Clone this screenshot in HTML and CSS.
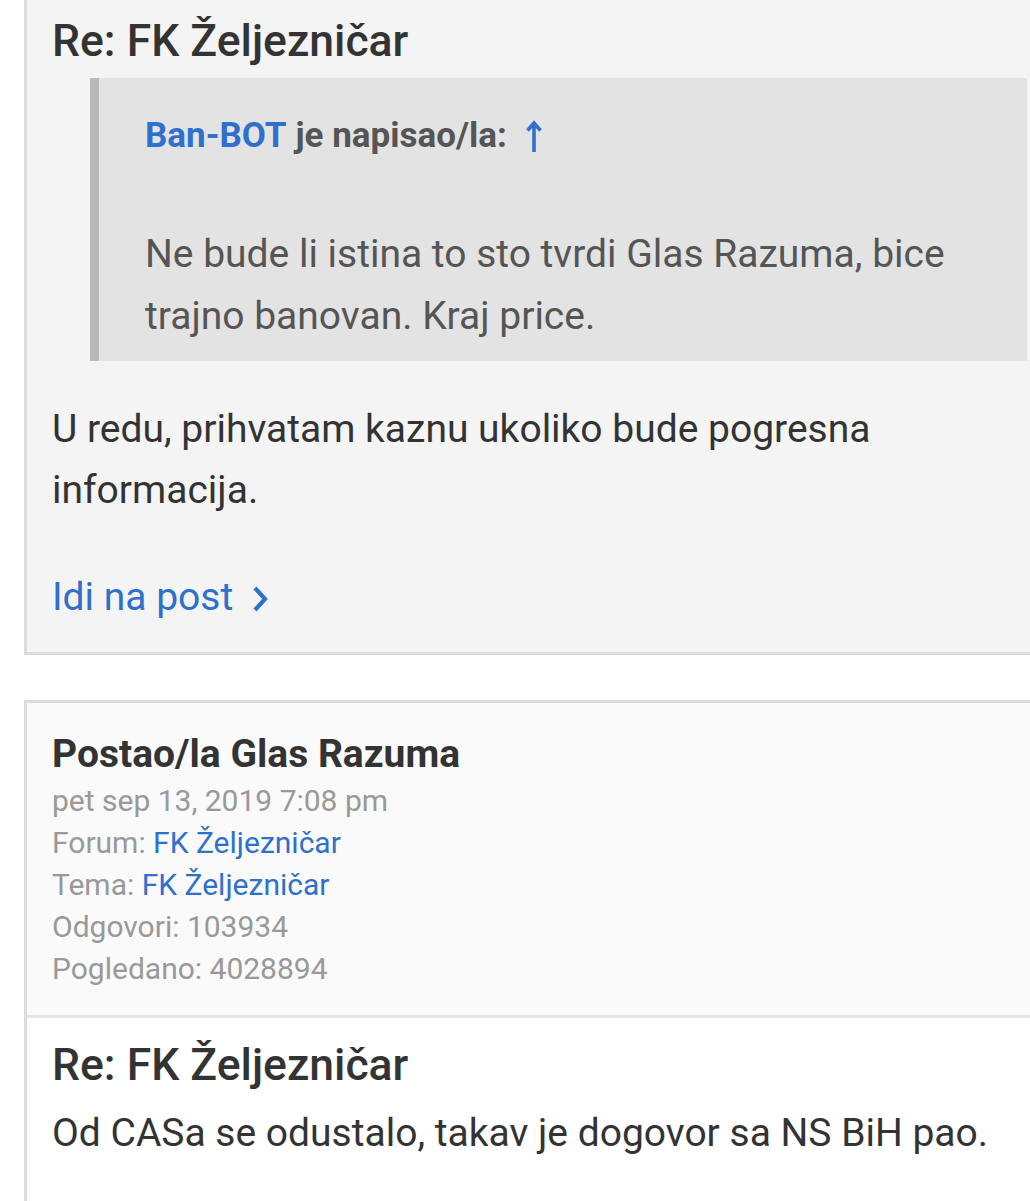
FILE: index.html
```html
<!DOCTYPE html>
<html lang="bs">
<head>
  <meta charset="UTF-8" />
  <meta name="viewport" content="width=device-width, initial-scale=1.0"/>
  <title>Pretraga – FK Željezničar</title>
  <link rel="stylesheet" href="styles.css">
</head>
<body>
  <div class="result result-prev">
    <h2 class="post-title">Re: FK Željezničar</h2>
    <blockquote class="quote">
      <cite><a href="#">Ban-BOT</a> je napisao/la:
        <a class="quote-up" href="#"><svg width="18" height="34" viewBox="0 0 18 34"><path d="M9 4 V33 M2.5 11.5 L9 4 L15.5 11.5" fill="none" stroke="currentColor" stroke-width="3.6"/></svg></a>
      </cite>
      <p>Ne bude li istina to sto tvrdi Glas Razuma, bice trajno banovan. Kraj price.</p>
    </blockquote>
    <p class="post-text">U redu, prihvatam kaznu ukoliko bude pogresna informacija.</p>
    <a class="goto" href="#">Idi na post
      <svg class="chev" width="20" height="30" viewBox="0 0 20 30"><path d="M5 4 L15 15 L5 26" fill="none" stroke="currentColor" stroke-width="4.2"/></svg>
    </a>
  </div>

  <div class="result">
    <div class="result-head">
      <h3 class="author">Postao/la Glas Razuma</h3>
      <ul class="meta">
        <li>pet sep 13, 2019 7:08 pm</li>
        <li>Forum: <a href="#">FK Željezničar</a></li>
        <li>Tema: <a href="#">FK Željezničar</a></li>
        <li>Odgovori: 103934</li>
        <li>Pogledano: 4028894</li>
      </ul>
    </div>
    <div class="result-body">
      <h2 class="post-title">Re: FK Željezničar</h2>
      <p class="post-text">Od CASa se odustalo, takav je dogovor sa NS BiH pao.</p>
    </div>
  </div>
</body>
</html>
```

FILE: styles.css
```css
html, body { overflow: hidden; }
body {
  margin: 0;
  font-family: Roboto, "Noto Sans", Arial, sans-serif;
  color: #333;
  background: #fff;
}
a { color: #2f70cc; text-decoration: none; }

.result {
  margin: 0 -40px 0 24px;
  border: 3px solid #dcdcdc;
  background: #fafafa;
}
.result-prev {
  border-top: none;
  background: #f4f4f4;
  padding: 15px 25px 24px 25px;
  margin-bottom: 45px;
}

.post-title {
  margin: 0 0 10px;
  font-size: 44.5px;
  font-weight: 500;
  line-height: 1.2;
}
.post-text {
  margin: 0;
  font-size: 39px;
  line-height: 61px;
}

.quote {
  margin: 0 15px 38px 38px;
  padding: 32px 46px 14px 46px;
  background: #e3e3e3;
  border-left: 9px solid #b9b9b9;
  color: #555;
}
.quote cite {
  display: flex;
  align-items: center;
  font-style: normal;
  font-weight: bold;
  font-size: 35px;
  line-height: 51px;
}
.quote cite a:first-child { margin-right: 9px; }
.quote-up { display: flex; margin-left: 18px; }
.quote p {
  margin: 62px 0 0;
  font-size: 39px;
  line-height: 62px;
}

.goto {
  display: inline-flex;
  align-items: center;
  gap: 17px;
  margin-top: 46px;
  font-size: 39px;
  line-height: 61px;
}
.chev { margin-top: 2px; }

.result-head {
  padding: 28px 25px 25px;
  border-bottom: 3px solid #e3e3e3;
}
.author {
  margin: 0 0 2px;
  font-size: 39px;
  font-weight: bold;
  line-height: 1.2;
}
.meta {
  list-style: none;
  margin: 0;
  padding: 0;
  color: #999;
  font-size: 30px;
  line-height: 42px;
}
.result-body {
  background: #fff;
  padding: 21px 25px 60px;
}
```
